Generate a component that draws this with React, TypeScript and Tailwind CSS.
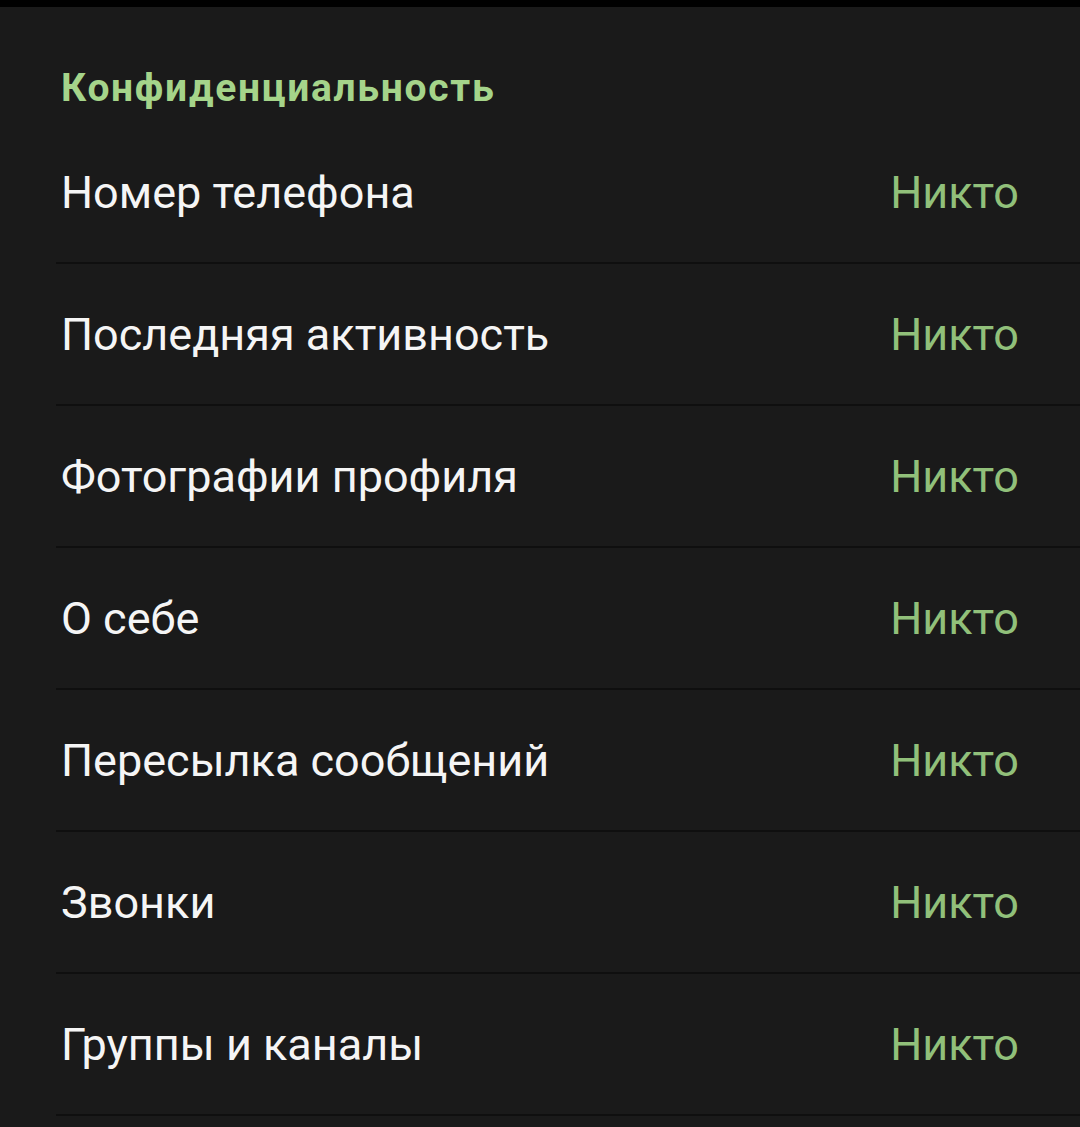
import React from "react";

const rows = [
  "Номер телефона",
  "Последняя активность",
  "Фотографии профиля",
  "О себе",
  "Пересылка сообщений",
  "Звонки",
  "Группы и каналы",
];

export default function App() {
  return (
    <div className="w-[1080px] h-[1127px] overflow-hidden bg-[#1a1a1a]" style={{ fontFamily: "Roboto, 'Noto Sans', sans-serif" }}>
      <div className="h-[7px] bg-black" />
      <div className="h-[115px] pl-[61px] pt-[61px]">
        <div className="text-[39px] leading-[40px] font-bold tracking-[1.7px] text-[#a5d48a]">Конфиденциальность</div>
      </div>
      {rows.map((r) => (
        <div key={r}>
          <div className="h-[140px] flex items-center justify-between pl-[61px] pr-[61px] pt-[2px]">
            <span className="text-[45px] text-[#f5f5f5]">{r}</span>
            <span className="text-[45px] text-[#91c07a]">Никто</span>
          </div>
          <div className="h-[2px] ml-[56px] bg-[#0f0f0f]" />
        </div>
      ))}
    </div>
  );
}
